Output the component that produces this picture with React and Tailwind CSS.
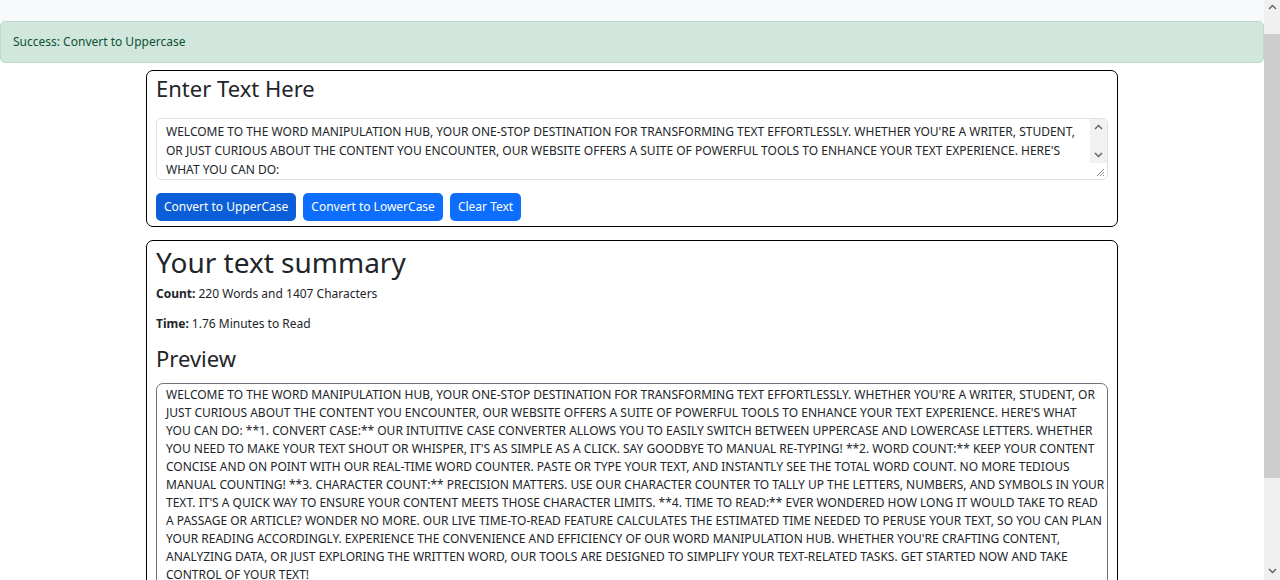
import React from "react";

const previewLines = [
  "WELCOME TO THE WORD MANIPULATION HUB, YOUR ONE-STOP DESTINATION FOR TRANSFORMING TEXT EFFORTLESSLY. WHETHER YOU'RE A WRITER, STUDENT, OR",
  "JUST CURIOUS ABOUT THE CONTENT YOU ENCOUNTER, OUR WEBSITE OFFERS A SUITE OF POWERFUL TOOLS TO ENHANCE YOUR TEXT EXPERIENCE. HERE'S WHAT",
  "YOU CAN DO: **1. CONVERT CASE:** OUR INTUITIVE CASE CONVERTER ALLOWS YOU TO EASILY SWITCH BETWEEN UPPERCASE AND LOWERCASE LETTERS. WHETHER",
  "YOU NEED TO MAKE YOUR TEXT SHOUT OR WHISPER, IT'S AS SIMPLE AS A CLICK. SAY GOODBYE TO MANUAL RE-TYPING! **2. WORD COUNT:** KEEP YOUR CONTENT",
  "CONCISE AND ON POINT WITH OUR REAL-TIME WORD COUNTER. PASTE OR TYPE YOUR TEXT, AND INSTANTLY SEE THE TOTAL WORD COUNT. NO MORE TEDIOUS",
  "MANUAL COUNTING! **3. CHARACTER COUNT:** PRECISION MATTERS. USE OUR CHARACTER COUNTER TO TALLY UP THE LETTERS, NUMBERS, AND SYMBOLS IN YOUR",
  "TEXT. IT'S A QUICK WAY TO ENSURE YOUR CONTENT MEETS THOSE CHARACTER LIMITS. **4. TIME TO READ:** EVER WONDERED HOW LONG IT WOULD TAKE TO READ",
  "A PASSAGE OR ARTICLE? WONDER NO MORE. OUR LIVE TIME-TO-READ FEATURE CALCULATES THE ESTIMATED TIME NEEDED TO PERUSE YOUR TEXT, SO YOU CAN PLAN",
  "YOUR READING ACCORDINGLY. EXPERIENCE THE CONVENIENCE AND EFFICIENCY OF OUR WORD MANIPULATION HUB. WHETHER YOU'RE CRAFTING CONTENT,",
  "ANALYZING DATA, OR JUST EXPLORING THE WRITTEN WORD, OUR TOOLS ARE DESIGNED TO SIMPLIFY YOUR TEXT-RELATED TASKS. GET STARTED NOW AND TAKE",
  "CONTROL OF YOUR TEXT!",
];

const inputLines = [
  "WELCOME TO THE WORD MANIPULATION HUB, YOUR ONE-STOP DESTINATION FOR TRANSFORMING TEXT EFFORTLESSLY. WHETHER YOU'RE A WRITER, STUDENT,",
  "OR JUST CURIOUS ABOUT THE CONTENT YOU ENCOUNTER, OUR WEBSITE OFFERS A SUITE OF POWERFUL TOOLS TO ENHANCE YOUR TEXT EXPERIENCE. HERE'S",
  "WHAT YOU CAN DO:",
];

function Caret({ up }) {
  return (
    <svg width="9" height="6" viewBox="0 0 9 6" className="block">
      <path
        d={up ? "M1 5 L4.5 1.5 L8 5" : "M1 1 L4.5 4.5 L8 1"}
        fill="none"
        stroke="#606060"
        strokeWidth="1.4"
      />
    </svg>
  );
}

export default function App() {
  return (
    <div
      className="flex h-[580px] w-[1280px] overflow-hidden bg-white text-[12px] leading-[18px] text-[#212529]"
      style={{ fontFamily: '"Noto Sans", "Open Sans", sans-serif' }}
    >
      <div className="h-[580px] w-[1264px] shrink-0 overflow-hidden">
        <div className="h-[21px] bg-[#f8f9fa]" />
        <div className="rounded-[5px] border border-[#badbcc] bg-[#d1e7dd] px-[12px] py-[11px] text-[#0f5132]">
          Success: Convert to Uppercase
        </div>

        <div className="mx-auto mt-[7px] w-[972px]">
          {/* Card 1 */}
          <div className="rounded-[7px] border border-black px-[9px] pt-[4px] pb-[5px]">
            <h3 className="text-[22px] leading-[26px]">Enter Text Here</h3>
            <div className="mt-[17px] flex h-[62px] rounded-[5px] border border-[#dee2e6] bg-white">
              <div className="flex-1 overflow-hidden whitespace-nowrap px-[9px] pt-[3px] leading-[19px] text-[#212529]">
                {inputLines.map((l, i) => (
                  <div key={i}>{l}</div>
                ))}
              </div>
              <div className="relative flex w-[17px] flex-col items-center">
                <div className="flex h-[44px] w-full flex-col items-center justify-between bg-[#f1f1f1] py-[5px]">
                  <Caret up />
                  <Caret />
                </div>
                <svg width="10" height="10" viewBox="0 0 10 10" className="absolute bottom-[2px] right-[2px]">
                  <path d="M9 2 L2 9 M9 5 L5 9 M9 8 L8 9" stroke="#8a8a8a" strokeWidth="1" />
                </svg>
              </div>
            </div>
            <div className="mt-[13px] flex gap-[7px]">
              <button className="h-[28px] rounded-[5px] bg-[#0b5ed7] px-[8px] text-white">
                Convert to UpperCase
              </button>
              <button className="h-[28px] rounded-[5px] bg-[#0d6efd] px-[8px] text-white">
                Convert to LowerCase
              </button>
              <button className="h-[28px] rounded-[5px] bg-[#0d6efd] px-[8px] text-white">
                Clear Text
              </button>
            </div>
          </div>

          {/* Card 2 */}
          <div className="mt-[13px] rounded-[7px] border border-black px-[9px] pt-[3px] pb-[10px]">
            <h1 className="text-[28px] leading-[36px]">Your text summary</h1>
            <p className="mt-[5px]">
              <b className="font-bold">Count:</b> 220 Words and 1407 Characters
            </p>
            <p className="mt-[12px]">
              <b className="font-bold">Time:</b> 1.76 Minutes to Read
            </p>
            <h3 className="mt-[12px] text-[22px] leading-[26px]">Preview</h3>
            <div className="mt-[12px] rounded-[7px] border border-[#6c757d] px-[9px] pt-[2px] pb-[4px] whitespace-nowrap">
              {previewLines.map((l, i) => (
                <div key={i}>{l}</div>
              ))}
            </div>
          </div>
        </div>
      </div>

      {/* page scrollbar */}
      <div className="flex w-[16px] shrink-0 flex-col bg-[#f0f0f0]">
        <div className="flex h-[14px] shrink-0 items-center justify-center">
          <Caret up />
        </div>
        <div className="mt-[20px] h-[444px] w-full shrink-0 bg-[#cdcdcd]" />
        <div className="flex-1" />
        <div className="flex h-[18px] shrink-0 items-center justify-center">
          <Caret />
        </div>
      </div>
    </div>
  );
}
